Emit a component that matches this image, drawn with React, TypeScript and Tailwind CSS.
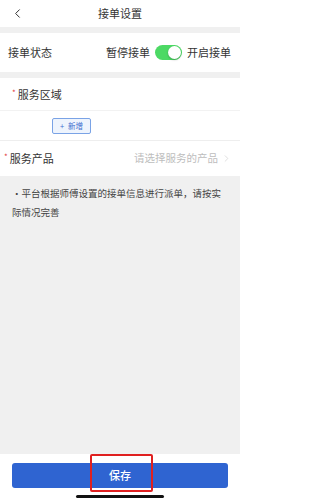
import { ChevronLeft, ChevronRight } from 'lucide-react'

const App = () => {
  return (
    <div className="relative w-[240px] h-[500px] bg-[#f0f0f0] flex flex-col text-[#333] font-['Noto_Sans_CJK_SC',sans-serif] overflow-hidden">
      {/* Header */}
      <div className="h-[27px] bg-white grid grid-cols-[40px_1fr_40px] items-center">
        <ChevronLeft className="w-[15px] h-[15px] ml-[10px] text-[#333]" strokeWidth={1.6} />
        <div className="text-center text-[11px] leading-none">接单设置</div>
        <div />
      </div>

      {/* Status row */}
      <div className="mt-[6px] h-[39px] bg-white flex items-center justify-between pl-[8px] pr-[9px] text-[11px] leading-none">
        <span>接单状态</span>
        <div className="flex items-center gap-[5px]">
          <span>暂停接单</span>
          <div className="w-[27px] h-[15px] rounded-full bg-[#4cd964] flex items-center justify-end pr-[1px]">
            <div className="w-[13px] h-[13px] rounded-full bg-white shadow-[0_1px_2px_rgba(0,0,0,0.25)]" />
          </div>
          <span>开启接单</span>
        </div>
      </div>

      {/* Service section */}
      <div className="mt-[6px] bg-white">
        <div className="h-[33px] flex items-center pl-[12px] border-b border-[#f2f2f2] text-[11px] leading-none">
          <span className="text-[#e23b3b] text-[8px] mr-[2px] -mt-[3px]">*</span>
          <span>服务区域</span>
        </div>
        <div className="h-[30px] flex items-center pl-[52px] border-b border-[#eeeeee]">
          <div className="w-[39px] h-[16px] border border-[#7aa3e6] bg-[#eef4fd] rounded-[2px] flex items-center justify-center gap-[4px] text-[7.5px] leading-none text-[#3d6fcf]">
            <span>+</span>
            <span>新增</span>
          </div>
        </div>
        <div className="h-[35px] flex items-center justify-between pl-[4px] pr-[8px] text-[11px] leading-none">
          <div className="flex items-center">
            <span className="text-[#e23b3b] text-[8px] mr-[2px] -mt-[3px]">*</span>
            <span>服务产品</span>
          </div>
          <div className="flex items-center gap-[3px] text-[#bdbdbd] text-[10.5px]">
            <span>请选择服务的产品</span>
            <ChevronRight className="w-[11px] h-[11px] text-[#d0d0d0]" strokeWidth={1.5} />
          </div>
        </div>
      </div>

      {/* Note */}
      <div className="flex-1 pt-[8px] pl-[12px] pr-[14px] text-[9.5px] leading-[19px] text-[#444]">
        <p>·平台根据师傅设置的接单信息进行派单，请按实际情况完善</p>
      </div>

      {/* Footer */}
      <div className="h-[46px] bg-white pt-[7px] px-[12px]">
        <button className="w-full h-[25px] rounded-[3px] bg-[#2f64d1] text-white text-[11px] leading-none font-medium">
          保存
        </button>
      </div>

      {/* Annotation highlight */}
      <div className="absolute left-[90px] top-[454px] w-[63px] h-[38px] border-2 border-[#e02020] rounded-[2px]" />
      {/* Home indicator */}
      <div className="absolute left-[76px] bottom-[2px] w-[88px] h-[3px] rounded-full bg-[#111]" />
    </div>
  )
}

export default App
